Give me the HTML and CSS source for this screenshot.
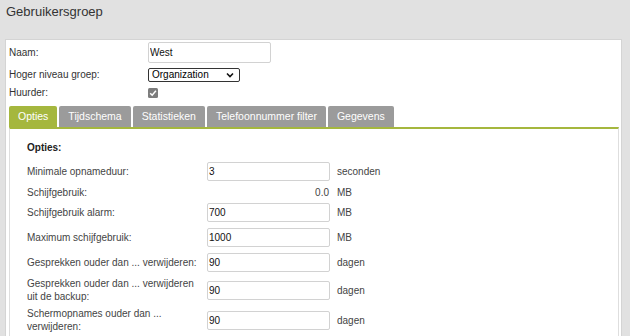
FILE: index.html
```html
<!DOCTYPE html>
<html lang="nl">
  <head>
    <meta charset="UTF-8" />
    <title>Gebruikersgroep</title>
    <link rel="stylesheet" href="styles.css">
  </head>
  <body>
    <h1 class="page-title">Gebruikersgroep</h1>
    <div class="panel">
      <div class="top-form">
        <label for="naam">Naam:</label>
        <div><input class="text-input name-input" id="naam" type="text" value="West" /></div>
        <label for="parent">Hoger niveau groep:</label>
        <div class="select-wrap">
          <select id="parent" class="group-select">
            <option>Organization</option>
          </select>
          <svg class="chevron" width="8" height="6" viewBox="0 0 8 6">
            <path d="M1 1.5 L4 4.5 L7 1.5" fill="none" stroke="#111" stroke-width="1.6" />
          </svg>
        </div>
        <label>Huurder:</label>
        <div>
          <svg class="check" width="10" height="10" viewBox="0 0 10 10">
            <rect x="0" y="0" width="10" height="10" rx="1.5" fill="#7d7d7d" />
            <path d="M2.2 5.2 L4.2 7.2 L7.9 2.8" fill="none" stroke="#fff" stroke-width="1.5" />
          </svg>
        </div>
      </div>

      <div class="tabs">
        <div class="tab active">Opties</div>
        <div class="tab">Tijdschema</div>
        <div class="tab">Statistieken</div>
        <div class="tab">Telefoonnummer filter</div>
        <div class="tab">Gegevens</div>
      </div>

      <div class="tab-content">
        <h3 class="section-title">Opties:</h3>
        <div class="opt-row">
          <span class="opt-label">Minimale opnameduur:</span>
          <input class="text-input" type="text" value="3" />
          <span class="unit">seconden</span>
        </div>
        <div class="opt-row text-row">
          <span class="opt-label">Schijfgebruik:</span>
          <span class="value">0.0</span>
          <span class="unit">MB</span>
        </div>
        <div class="opt-row">
          <span class="opt-label">Schijfgebruik alarm:</span>
          <input class="text-input" type="text" value="700" />
          <span class="unit">MB</span>
        </div>
        <div class="opt-row">
          <span class="opt-label">Maximum schijfgebruik:</span>
          <input class="text-input" type="text" value="1000" />
          <span class="unit">MB</span>
        </div>
        <div class="opt-row">
          <span class="opt-label">Gesprekken ouder dan ... verwijderen:</span>
          <input class="text-input" type="text" value="90" />
          <span class="unit">dagen</span>
        </div>
        <div class="opt-row">
          <span class="opt-label">Gesprekken ouder dan ... verwijderen uit de backup:</span>
          <input class="text-input" type="text" value="90" />
          <span class="unit">dagen</span>
        </div>
        <div class="opt-row">
          <span class="opt-label">Schermopnames ouder dan ... verwijderen:</span>
          <input class="text-input" type="text" value="90" />
          <span class="unit">dagen</span>
        </div>
      </div>
    </div>
  </body>
</html>
```

FILE: styles.css
```css
html,
body {
  height: 336px;
}
body {
  margin: 0;
  background-color: #e1e1e1;
  font-family: "Liberation Sans", Arial, sans-serif;
  font-size: 10px;
  color: #333;
  overflow: hidden;
  display: flex;
  flex-direction: column;
}
.page-title {
  margin: 0;
  padding: 4px 6px 20px;
  font-size: 13px;
  font-weight: normal;
  line-height: 15px;
  color: #333;
}
.panel {
  flex: 1;
  min-height: 0;
  margin: 0 8px 0 5px;
  padding: 0 2px 0 3px;
  background-color: white;
  border: 1px solid #d4d4d4;
  border-bottom: 0;
  display: flex;
  flex-direction: column;
  overflow: hidden;
}
.top-form {
  display: grid;
  grid-template-columns: 139px 1fr;
  grid-template-rows: 24px 21px 15px;
  align-items: center;
}
.top-form label {
  color: #333;
}
.top-form > div {
  display: flex;
  align-items: center;
}
.text-input {
  box-sizing: border-box;
  width: 123px;
  height: 19px;
  margin: 0;
  padding: 0 1px;
  border: 1px solid #d2d2d2;
  border-radius: 2px;
  font-family: "Liberation Sans", Arial, sans-serif;
  font-size: 10px;
  color: #111;
  background: white;
}
.name-input {
  height: 21px;
}
.select-wrap {
  position: relative;
  width: 92px;
}
.group-select {
  appearance: none;
  box-sizing: border-box;
  width: 92px;
  height: 14px;
  margin: 0;
  padding: 0 0 0 3px;
  border: 1px solid #333;
  border-radius: 2px;
  background: white;
  font-family: "Liberation Sans", Arial, sans-serif;
  font-size: 10px;
  line-height: 12px;
  color: #000;
}
.chevron {
  position: absolute;
  right: 6px;
  top: 4px;
}
.check {
  display: block;
  margin-top: 1px;
}
.tabs {
  display: flex;
  gap: 2px;
  margin-top: 6px;
  height: 21px;
  flex-shrink: 0;
}
.tab {
  padding: 0 9px;
  background-color: #9b9b9b;
  color: white;
  font-size: 10.5px;
  line-height: 21px;
  border-radius: 2px 2px 0 0;
}
.tab.active {
  background-color: #a5b73e;
}
.tab-content {
  flex: 1;
  border-top: 2px solid #a5b73e;
  border-left: 1px solid #dedede;
  border-right: 1px solid #dedede;
  padding: 12px 0 0 17px;
}
.section-title {
  margin: 0 0 4px;
  font-size: 10px;
  font-weight: bold;
  line-height: 14px;
  color: #222;
}
.opt-row {
  display: grid;
  grid-template-columns: 173px 123px auto;
  column-gap: 7px;
  align-items: center;
  min-height: 25px;
  padding: 2px 0;
  box-sizing: border-box;
}
.opt-row.text-row {
  min-height: 16px;
  padding: 0;
}
.opt-label {
  width: 172px;
  line-height: 13px;
  color: #444;
}
.value {
  text-align: right;
  padding-right: 1px;
  color: #444;
}
.unit {
  color: #444;
}
```
